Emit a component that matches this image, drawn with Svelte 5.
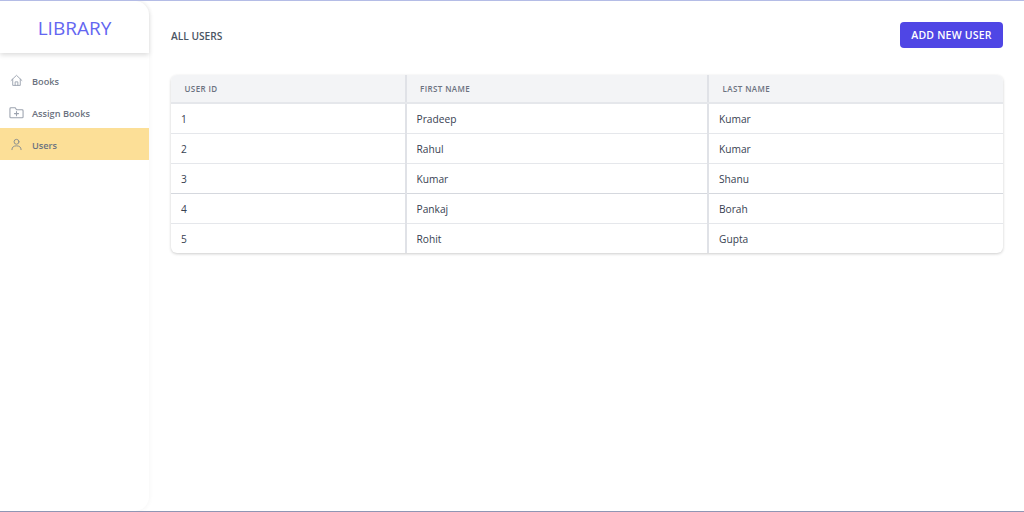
<script lang="ts">
	const users = [
		{ id: 1, first: 'Pradeep', last: 'Kumar' },
		{ id: 2, first: 'Rahul', last: 'Kumar' },
		{ id: 3, first: 'Kumar', last: 'Shanu' },
		{ id: 4, first: 'Pankaj', last: 'Borah' },
		{ id: 5, first: 'Rohit', last: 'Gupta' }
	];
</script>

<div class="page">
	<aside class="sidebar">
		<div class="brand">LIBRARY</div>
		<nav class="menu">
			<a class="item" href="#books">
				<span class="icon">
					<svg viewBox="0 0 24 24" width="13" height="13" fill="none" stroke="currentColor" stroke-width="1.7" stroke-linecap="round" stroke-linejoin="round">
						<path d="M2 12 12 2.500 22 12" />
						<path d="M5 9.500V21h14V9.500" />
						<path d="M9.500 21v-6.500h5V21" />
					</svg>
				</span>
				<span class="label">Books</span>
			</a>
			<a class="item" href="#assign">
				<span class="icon">
					<svg viewBox="0 0 24 24" width="15" height="15" fill="none" stroke="currentColor" stroke-width="1.700" stroke-linecap="round" stroke-linejoin="round">
						<path d="M1.500 6V19a1.500 1.500 0 0 0 1.500 1.500h18a1.500 1.500 0 0 0 1.500-1.500V9A1.500 1.500 0 0 0 21 7.500h-9l-2-3H3A1.500 1.500 0 0 0 1.500 6z" />
						<path d="M12 10.500v6.500M8.750 13.750h6.500" />
					</svg>
				</span>
				<span class="label">Assign Books</span>
			</a>
			<a class="item active" href="#users">
				<span class="icon">
					<svg viewBox="0 0 24 24" width="13" height="13" fill="none" stroke="currentColor" stroke-width="1.8" stroke-linecap="round" stroke-linejoin="round">
						<circle cx="12" cy="7" r="4.500" />
						<path d="M3.500 21.500c0-5 3.500-7 8.500-7s8.500 2 8.500 7" />
					</svg>
				</span>
				<span class="label">Users</span>
			</a>
		</nav>
	</aside>

	<main class="content">
		<header class="top">
			<h1>ALL USERS</h1>
			<button class="add">ADD NEW USER</button>
		</header>

		<div class="table-wrap">
			<table>
				<thead>
					<tr>
						<th class="col-id">USER ID</th>
						<th class="col-first">FIRST NAME</th>
						<th>LAST NAME</th>
					</tr>
				</thead>
				<tbody>
					{#each users as user}
						<tr>
							<td>{user.id}</td>
							<td>{user.first}</td>
							<td>{user.last}</td>
						</tr>
					{/each}
				</tbody>
			</table>
		</div>
	</main>
</div>

<style>
	:global(body) {
		margin: 0;
		background: #fff;
	}

	.page {
		display: flex;
		box-sizing: border-box;
		height: 512px;
		border-top: 1px solid #b4bce6;
		border-bottom: 1px solid #8f96b4;
		font-family: 'Open Sans', 'Noto Sans', sans-serif;
		color: #374151;
		overflow: hidden;
	}

	.sidebar {
		flex: 0 0 149px;
		background: #fff;
		border-radius: 0 14px 14px 0;
		box-shadow: 0 0 5px rgba(0, 0, 0, 0.05);
	}

	.brand {
		display: flex;
		align-items: center;
		justify-content: center;
		box-sizing: border-box;
		height: 52px;
		padding-top: 2px;
		font-size: 19px;
		color: #6366f1;
		border-radius: 0 14px 0 0;
		box-shadow: 0 2px 5px rgba(0, 0, 0, 0.14);
	}

	.menu {
		display: flex;
		flex-direction: column;
		padding-top: 11px;
	}

	.item {
		display: flex;
		align-items: center;
		height: 32px;
		font-size: 9.200px;
		font-weight: 600;
		color: #6b7280;
		text-decoration: none;
	}

	.label {
		padding-top: 2px;
	}

	.icon {
		display: flex;
		align-items: center;
		justify-content: center;
		flex: none;
		width: 15px;
		margin: 1px 8px 0 9px;
		color: #9ca3af;
	}

	.active {
		background: #fcdf97;
	}

	.active .icon {
		color: #8b8f8f;
	}

	.content {
		flex: 1;
		padding: 0 21px 0 22px;
	}

	.top {
		display: flex;
		align-items: center;
		justify-content: space-between;
		box-sizing: border-box;
		height: 74px;
		padding-bottom: 5px;
	}

	h1 {
		margin: 0;
		font-size: 10.200px;
		font-weight: 600;
		color: #4b5563;
	}

	.add {
		width: 103px;
		height: 26px;
		margin-top: -1px;
		padding: 0;
		border: none;
		border-radius: 4px;
		background: #4f46e5;
		color: #fff;
		font: 600 10.500px 'Open Sans', sans-serif;
		letter-spacing: 0.2px;
	}

	.table-wrap {
		border-radius: 6px;
		overflow: hidden;
		box-shadow: 0 1px 3px rgba(0, 0, 0, 0.2);
	}

	table {
		width: 100%;
		border-collapse: collapse;
		table-layout: fixed;
	}

	.col-id {
		width: 234.500px;
	}

	.col-first {
		width: 302.500px;
	}

	th {
		box-sizing: border-box;
		height: 28px;
		padding: 0 0 0 13.500px;
		background: #f3f4f6;
		border-bottom: 2px solid #e5e7eb;
		font-size: 8px;
		font-weight: 600;
		letter-spacing: 0.4px;
		color: #6b7280;
		text-align: left;
	}

	td {
		box-sizing: border-box;
		height: 30px;
		padding: 2px 0 0 10px;
		border-bottom: 1px solid #e5e7eb;
		font-size: 10.200px;
		color: #374151;
	}

	tr:nth-child(3) td {
		border-bottom-color: #d5d8de;
	}

	tr:last-child td {
		border-bottom: none;
	}

	th:not(:last-child),
	td:not(:last-child) {
		border-right: 2px solid #e0e2e7;
	}
</style>
